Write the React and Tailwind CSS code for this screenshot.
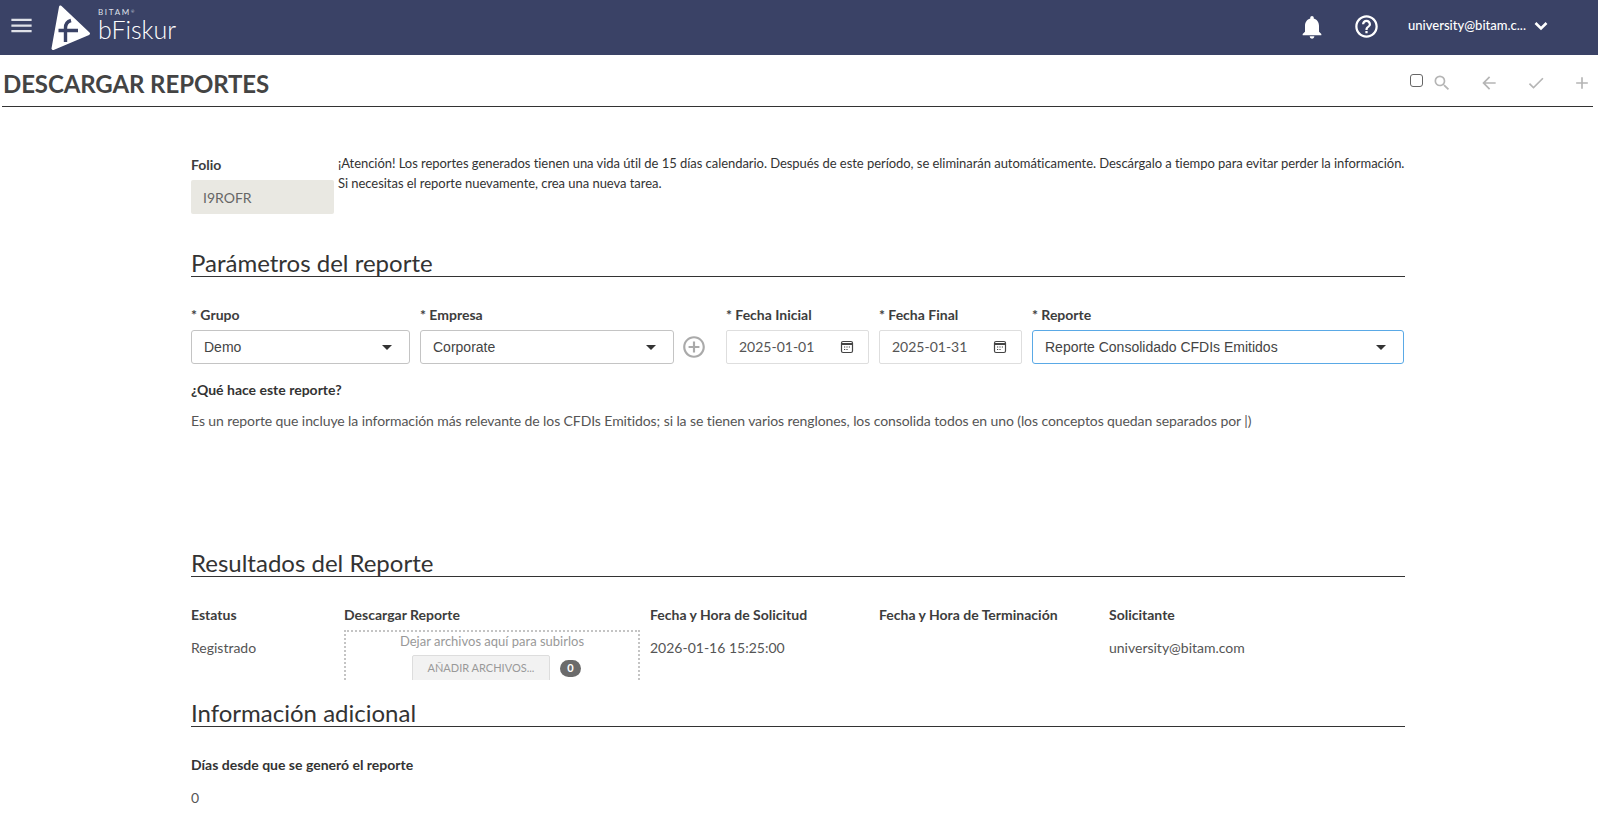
import React from 'react';
import { MdMenu, MdNotifications, MdHelpOutline, MdSearch, MdArrowBack, MdCheck, MdAdd, MdAddCircleOutline } from 'react-icons/md';

const Logo = () => (
    <svg width="42" height="46" viewBox="0 0 42 46" className="block">
        <path d="M10.5 2 L38.5 28.5 L3 43.5 Z" fill="#fff" stroke="#fff" strokeWidth="3" strokeLinejoin="round" />
        <path d="M8.5 25.5 H28 M15.5 37 V23 Q15.5 17 21 15.5" fill="none" stroke="#3a4266" strokeWidth="3.4" />
    </svg>
);

const CalendarIcon = () => (
    <svg width="14" height="14" viewBox="0 0 14 14" fill="none" className="shrink-0">
        <rect x="1.5" y="1.5" width="11" height="11" rx="1.5" stroke="#444" strokeWidth="1.2" />
        <path d="M1.5 4 H12.5" stroke="#444" strokeWidth="2" />
        <path d="M4 7 H5.2 M6.4 7 H7.6 M8.8 7 H10 M4 9.5 H5.2 M6.4 9.5 H7.6" stroke="#444" strokeWidth="1.2" />
    </svg>
);

const Field = ({ label, className, children }) => (
    <div className={className}>
        <div className="text-sm font-bold text-[#3d3d3d] leading-[20px] mb-[5px]">{label}</div>
        {children}
    </div>
);

const SelectBox = ({ value, focused }) => (
    <div className={`h-[34px] flex items-center justify-between pl-3 pr-[17px] rounded-[3px] border font-['Liberation_Sans',sans-serif] text-sm text-[#444] ${focused ? 'border-[#5aa9e6]' : 'border-[#c4c4c4]'}`}>
        <span>{value}</span>
        <span className="w-0 h-0 border-l-[5px] border-r-[5px] border-t-[5px] border-l-transparent border-r-transparent border-t-[#333]"></span>
    </div>
);

const DateBox = ({ value }) => (
    <div className="h-[34px] flex items-center justify-between pl-3 pr-[14px] rounded-[2px] border border-[#dedede] text-sm text-[#555]">
        <span className="pb-[1px]">{value}</span>
        <CalendarIcon />
    </div>
);

const SectionTitle = ({ children, className }) => (
    <h2 className={`text-2xl leading-[27px] font-normal text-[#333] border-b border-[#333] ${className}`}>{children}</h2>
);

const App = () => {
    return (
        <div className="w-[1598px] h-[817px] overflow-hidden bg-white font-['Lato',sans-serif] text-[#444]">
            {/* Barra superior */}
            <header className="h-[55px] bg-[#3a4266] flex items-center text-white">
                <MdMenu className="ml-[8px] mb-[5px] text-[#dfe1e8]" size={27} />
                <div className="ml-[15px]"><Logo /></div>
                <div className="ml-[6px] mb-[5px] flex flex-col">
                    <span className="text-[8px] leading-[8px] tracking-[1.7px] text-[#dfe1ea]">BITAM<sup className="text-[4px]">®</sup></span>
                    <span className="text-[25px] leading-[26px] font-light">bFiskur</span>
                </div>
                <div className="ml-auto flex items-center mb-[3px]">
                    <MdNotifications size={28} className="mt-[2px]" />
                    <MdHelpOutline size={27} className="ml-[27px]" />
                    <span className="ml-[28px] text-[13px] font-medium">university@bitam.c...</span>
                    <svg width="14" height="10" viewBox="0 0 14 10" fill="none" className="ml-[8px] mr-[50px]">
                        <path d="M1.5 2 L7 7.5 L12.5 2" stroke="#fff" strokeWidth="2.6" />
                    </svg>
                </div>
            </header>

            {/* Titulo */}
            <div className="h-[52px] mx-[2px] w-[1591px] border-b border-[#333] flex items-center justify-between">
                <h1 className="text-2xl font-bold text-[#444] pl-[1px] pt-[7px] tracking-[-0.1px]">DESCARGAR REPORTES</h1>
                <div className="flex items-center text-[#b5b5b5] pt-[4px]">
                    <span className="w-[13px] h-[13px] mb-[5px] rounded-[3px] border border-[#666]"></span>
                    <MdSearch size={20} className="ml-[9px]" />
                    <MdArrowBack size={20} className="ml-[27px]" />
                    <MdCheck size={20} className="ml-[27px]" />
                    <MdAdd size={20} className="ml-[26px] mr-[1px]" />
                </div>
            </div>

            <main className="ml-[191px] w-[1214px]">
                <div className="flex mt-[48px]">
                    <Field label="Folio" className="w-[143px] shrink-0">
                        <div className="h-[34px] flex items-center pl-3 pt-[1px] bg-[#e9e8e2] rounded-[2px] text-sm text-[#666]">I9ROFR</div>
                    </Field>
                    <p className="ml-[4px] -mt-[2px] text-[13px] leading-[20px] text-[#333] tracking-[-0.046px] whitespace-nowrap">
                        ¡Atención! Los reportes generados tienen una vida útil de 15 días calendario. Después de este período, se eliminarán automáticamente. Descárgalo a tiempo para evitar perder la información.<br />
                        Si necesitas el reporte nuevamente, crea una nueva tarea.
                    </p>
                </div>

                <SectionTitle className="mt-[35px]">Parámetros del reporte</SectionTitle>

                <div className="flex mt-[28px]">
                    <Field label="* Grupo" className="w-[219px]"><SelectBox value="Demo" /></Field>
                    <Field label="* Empresa" className="w-[254px] ml-[10px]"><SelectBox value="Corporate" /></Field>
                    <div className="w-[52px] flex items-end h-[59px] pb-[4px] pl-[7px] text-[#aaa]">
                        <MdAddCircleOutline size={26} />
                    </div>
                    <Field label="* Fecha Inicial" className="w-[143px]"><DateBox value="2025-01-01" /></Field>
                    <Field label="* Fecha Final" className="w-[143px] ml-[10px]"><DateBox value="2025-01-31" /></Field>
                    <Field label="* Reporte" className="w-[372px] ml-[10px]"><SelectBox value="Reporte Consolidado CFDIs Emitidos" focused /></Field>
                </div>

                <div className="mt-[16px] text-sm font-bold leading-[20px] text-[#333]">¿Qué hace este reporte?</div>
                <p className="mt-[11px] text-sm leading-[20px] text-[#555] tracking-[-0.09px]">
                    Es un reporte que incluye la información más relevante de los CFDIs Emitidos; si la se tienen varios renglones, los consolida todos en uno (los conceptos quedan separados por |)
                </p>

                <SectionTitle className="mt-[118px]">Resultados del Reporte</SectionTitle>

                <div className="flex mt-[28px] h-[76px]">
                    <div className="w-[153px]">
                        <div className="text-sm font-bold leading-[20px] text-[#3d3d3d]">Estatus</div>
                        <div className="mt-[13px] text-sm leading-[20px] text-[#555]">Registrado</div>
                    </div>
                    <div className="w-[306px]">
                        <div className="text-sm font-bold leading-[20px] text-[#3d3d3d]">Descargar Reporte</div>
                        <div className="mt-[5px] w-[296px] h-[50px] overflow-hidden border-t-2 border-l-2 border-r-2 border-dotted border-[#c4c4c4] flex flex-col items-center">
                            <span className="text-[13px] leading-[18px] text-[#999]">Dejar archivos aquí para subirlos</span>
                            <div className="mt-[5px] self-start ml-[66px] flex items-start">
                                <span className="w-[138px] h-[27px] flex items-center justify-center bg-[#f2f2f2] border border-[#ddd] rounded-[2px] text-[11px] text-[#999]">AÑADIR ARCHIVOS...</span>
                                <span className="ml-[10px] mt-[5px] w-[21px] h-[17px] rounded-full bg-[#6b6b6b] flex items-center justify-center text-[11px] font-bold text-white">0</span>
                            </div>
                        </div>
                    </div>
                    <div className="w-[229px]">
                        <div className="text-sm font-bold leading-[20px] text-[#3d3d3d]">Fecha y Hora de Solicitud</div>
                        <div className="mt-[13px] text-sm leading-[20px] text-[#555]">2026-01-16 15:25:00</div>
                    </div>
                    <div className="w-[230px]">
                        <div className="text-sm font-bold leading-[20px] text-[#3d3d3d]">Fecha y Hora de Terminación</div>
                    </div>
                    <div>
                        <div className="text-sm font-bold leading-[20px] text-[#3d3d3d]">Solicitante</div>
                        <div className="mt-[13px] text-sm leading-[20px] text-[#555]">university@bitam.com</div>
                    </div>
                </div>

                <SectionTitle className="mt-[18px]">Información adicional</SectionTitle>

                <div className="mt-[28px] text-sm font-bold leading-[20px] text-[#333]">Días desde que se generó el reporte</div>
                <div className="mt-[13px] text-sm leading-[20px] text-[#555]">0</div>
            </main>
        </div>
    );
};

export default App;
